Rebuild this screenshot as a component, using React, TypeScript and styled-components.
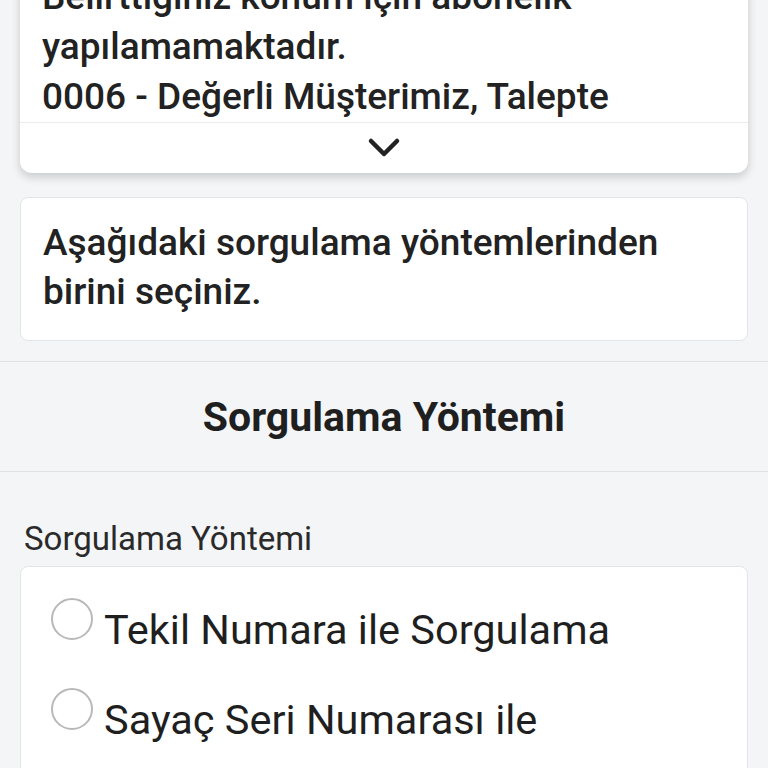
import styled, { createGlobalStyle } from 'styled-components';

const GlobalStyle = createGlobalStyle`
  html, body {
    margin: 0;
    padding: 0;
    background: #f4f5f7;
    font-family: Roboto, "Noto Sans", sans-serif;
    color: #222;
    overflow: hidden;
  }
`;

const Page = styled.div`
  width: 768px;
  height: 768px;
  overflow: hidden;
`;

const Inner = styled.div`
  padding: 0 20px;
`;

const ResultCard = styled.div`
  margin-top: -40px;
  background: #fff;
  border-radius: 12px;
  box-shadow: 0 4px 10px rgba(0, 0, 0, 0.18);
  overflow: hidden;
`;

const ResultText = styled.div`
  padding: 12px 22px 0;
  height: 150px;
  overflow: hidden;
  font-size: 37px;
  font-weight: 500;
  line-height: 50px;
`;

const ExpandBar = styled.div`
  height: 50px;
  border-top: 1px solid #ececec;
  box-shadow: 0 -6px 8px rgba(255, 255, 255, 0.9);
  display: flex;
  align-items: center;
  justify-content: center;
`;

const InfoCard = styled.div`
  margin-top: 24px;
  background: #fff;
  border: 1px solid #e4e5e7;
  border-radius: 8px;
  padding: 20px 22px 24px;
  font-size: 37px;
  font-weight: 500;
  line-height: 49px;
`;

const SectionHeader = styled.div`
  margin-top: 20px;
  height: 109px;
  border-top: 1px solid #e0e1e3;
  border-bottom: 1px solid #e0e1e3;
  display: flex;
  align-items: center;
  justify-content: center;
  font-size: 41px;
  font-weight: 700;
  color: #1f1f1f;
`;

const FieldLabel = styled.div`
  margin: 50px 0 0 24px;
  font-size: 33px;
  line-height: 34px;
  color: #2a2a2a;
`;

const OptionsCard = styled.div`
  margin-top: 10px;
  background: #fff;
  border: 1px solid #e4e5e7;
  border-radius: 8px;
  padding: 31px 30px 30px;
`;

const Option = styled.label`
  display: flex;
  align-items: flex-start;
  gap: 11px;
  height: 90px;
  font-size: 41.5px;
  color: #1f1f1f;
`;

const RadioCircle = styled.span`
  flex: none;
  width: 38px;
  height: 38px;
  border: 2px solid #b9b9b9;
  border-radius: 50%;
`;

const OptionText = styled.span`
  line-height: 64px;
`;

const Chevron = () => (
  <svg width="34" height="22" viewBox="0 0 34 22" fill="none">
    <path d="M4 4 L17 17 L30 4" stroke="#222" strokeWidth="4.5" strokeLinecap="round" strokeLinejoin="round" />
  </svg>
);

const App = () => {
  return (
    <Page>
      <GlobalStyle />
      <Inner>
        <ResultCard>
          <ResultText>
            Belirttiğiniz konum için abonelik
            <br />
            yapılamamaktadır.
            <br />
            0006 - Değerli Müşterimiz, Talepte
          </ResultText>
          <ExpandBar>
            <Chevron />
          </ExpandBar>
        </ResultCard>

        <InfoCard>Aşağıdaki sorgulama yöntemlerinden birini seçiniz.</InfoCard>
      </Inner>

      <SectionHeader>Sorgulama Yöntemi</SectionHeader>

      <FieldLabel>Sorgulama Yöntemi</FieldLabel>

      <Inner>
        <OptionsCard>
          <Option>
            <RadioCircle />
            <OptionText>Tekil Numara ile Sorgulama</OptionText>
          </Option>
          <Option>
            <RadioCircle />
            <OptionText>Sayaç Seri Numarası ile</OptionText>
          </Option>
        </OptionsCard>
      </Inner>
    </Page>
  );
};

export default App;
